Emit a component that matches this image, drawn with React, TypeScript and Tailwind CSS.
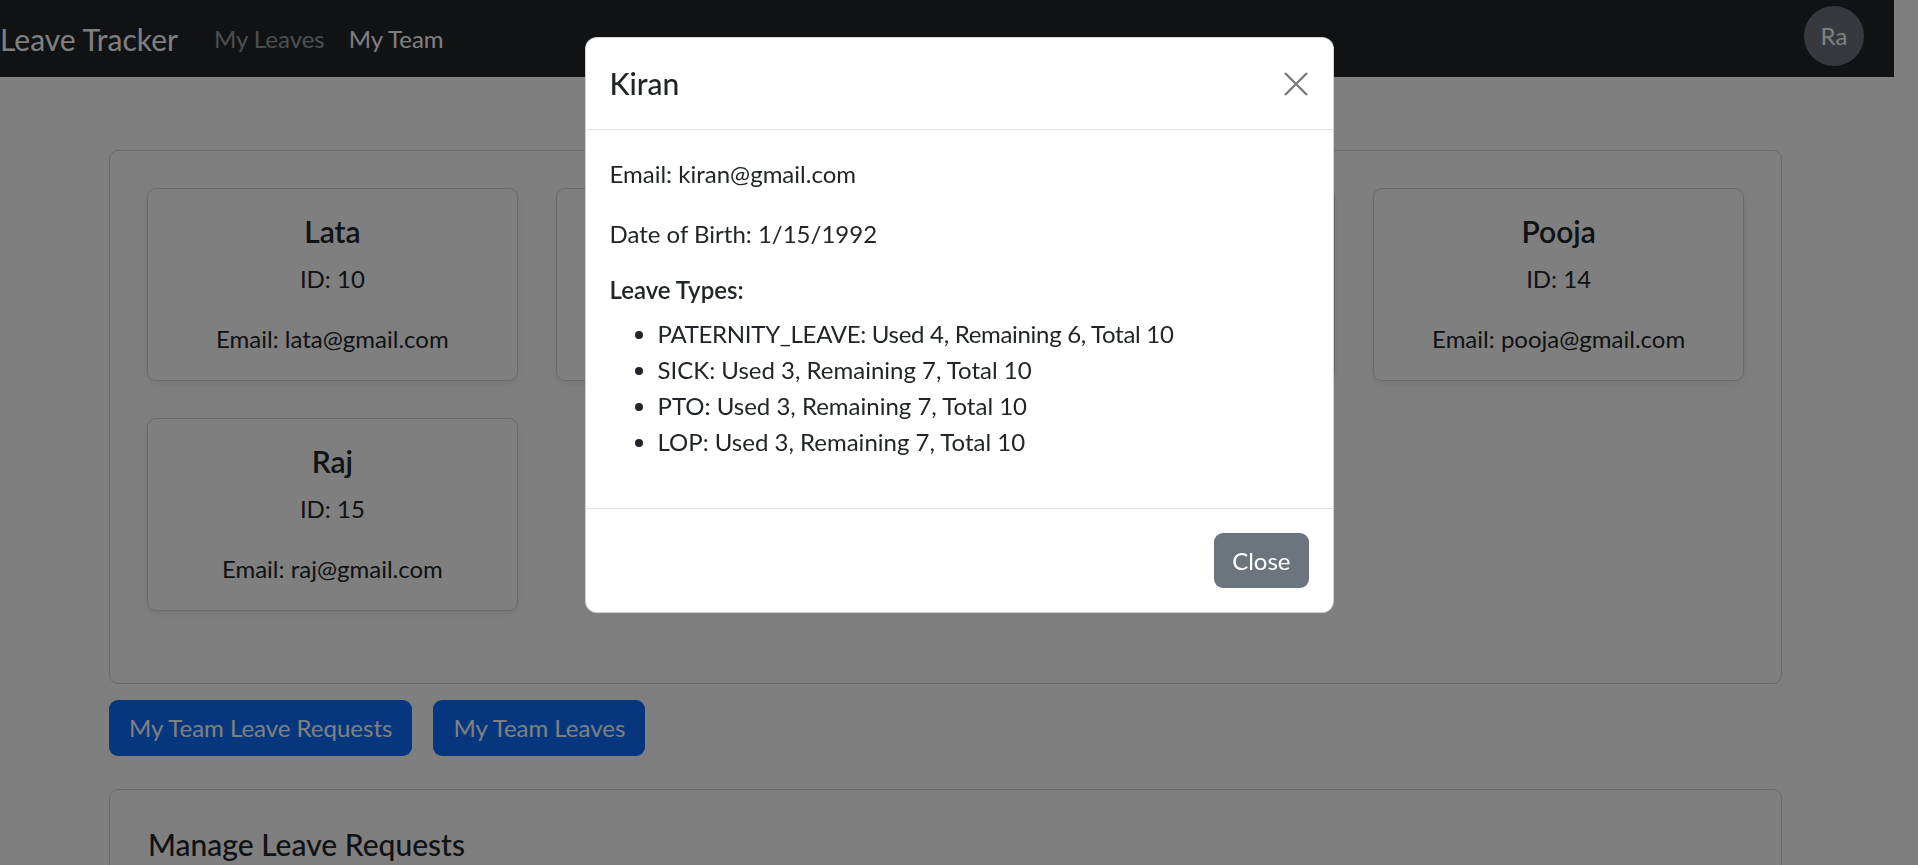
import React from "react";

const employees = [
  { name: "Lata", id: 10, email: "lata@gmail.com", hidden: false },
  { name: "", id: 12, email: "", hidden: true },
  { name: "", id: 13, email: "", hidden: true },
  { name: "Pooja", id: 14, email: "pooja@gmail.com", hidden: false },
  { name: "Raj", id: 15, email: "raj@gmail.com", hidden: false },
];

const leaves = [
  "PATERNITY_LEAVE: Used 4, Remaining 6, Total 10",
  "SICK: Used 3, Remaining 7, Total 10",
  "PTO: Used 3, Remaining 7, Total 10",
  "LOP: Used 3, Remaining 7, Total 10",
];

export default function App() {
  return (
    <div
      className="relative min-h-screen w-[1918px] h-[865px] overflow-hidden bg-white text-[#212529]"
      style={{ fontFamily: "Lato, 'Noto Sans', sans-serif" }}
    >
      {/* Navbar */}
      <nav className="flex h-[77px] w-[1894px] items-center bg-[#212529] pr-[30px]">
        <span className="mr-[24px] text-[30px] leading-none text-white">Leave Tracker</span>
        <span className="px-[12px] text-[24px] leading-none text-white/55">My Leaves</span>
        <span className="px-[12px] text-[24px] leading-none text-white">My Team</span>
        <div className="ml-auto mt-[6px] flex h-[60px] w-[60px] items-center justify-center self-start rounded-full bg-[#6c757d] text-[24px] text-white">
          Ra
        </div>
      </nav>

      {/* Main */}
      <main className="ml-[109px] w-[1673px] pt-[73px]">
        <div className="rounded-[9px] border border-black/[0.175] px-[37px] pt-[37px] pb-[72px]">
          <div className="grid grid-cols-4 gap-x-[38px] gap-y-[37px]">
            {employees.map((e) => (
              <div
                key={e.id}
                className="h-[193px] rounded-[9px] border border-black/[0.175] pt-[24px] text-center shadow-[0_3px_6px_rgba(0,0,0,0.075)]"
              >
                {!e.hidden && (
                  <>
                    <div className="text-[30px] font-semibold leading-[36px]">{e.name}</div>
                    <div className="mt-[12px] text-[24px] leading-[36px]">ID: {e.id}</div>
                    <div className="mt-[24px] text-[24px] leading-[36px]">Email: {e.email}</div>
                  </>
                )}
              </div>
            ))}
          </div>
        </div>

        <div className="mt-[16px] flex gap-[21px]">
          <button className="h-[56px] rounded-[9px] bg-[#0d6efd] px-[20px] text-[24px] text-white">
            My Team Leave Requests
          </button>
          <button className="h-[56px] rounded-[9px] bg-[#0d6efd] px-[20px] text-[24px] text-white">
            My Team Leaves
          </button>
        </div>

        <div className="mt-[33px] h-[300px] rounded-[9px] border border-black/[0.175] px-[38px] pt-[42px]">
          <div className="text-[30px] font-medium leading-[24px]">Manage Leave Requests</div>
        </div>
      </main>

      {/* Backdrop */}
      <div className="fixed inset-0 bg-black/50" />

      {/* Modal */}
      <div className="fixed inset-0 flex items-start justify-center pt-[37px]">
        <div className="w-[749px] overflow-hidden rounded-[12px] border border-black/[0.175] bg-white">
          <div className="flex h-[92px] items-center justify-between border-b border-[#dee2e6] px-[24px]">
            <div className="text-[30px] font-medium leading-[45px]">Kiran</div>
            <svg width="24" height="24" viewBox="0 0 24 24" className="mr-[1px]">
              <path d="M1 1 L23 23 M23 1 L1 23" stroke="#7b7b7b" strokeWidth="2.4" fill="none" />
            </svg>
          </div>
          <div className="px-[24px] pt-[26px] pb-[24px] text-[24px] leading-[36px]">
            <p className="mb-[24px]">Email: kiran@gmail.com</p>
            <p className="mb-[23px]">Date of Birth: 1/15/1992</p>
            <div className="mb-[12px] text-[24px] font-semibold leading-[29px]">Leave Types:</div>
            <ul className="mb-[24px] list-disc pl-[48px]">
              {leaves.map((l, i) => (
                <li key={l} className={i === 0 ? "tracking-[-0.3px]" : ""}>
                  {l}
                </li>
              ))}
            </ul>
          </div>
          <div className="flex justify-end border-t border-[#dee2e6] px-[18px] py-[18px]">
            <button className="m-[6px] h-[55px] rounded-[9px] bg-[#6c757d] px-[18px] text-[24px] text-white">
              Close
            </button>
          </div>
        </div>
      </div>
    </div>
  );
}
